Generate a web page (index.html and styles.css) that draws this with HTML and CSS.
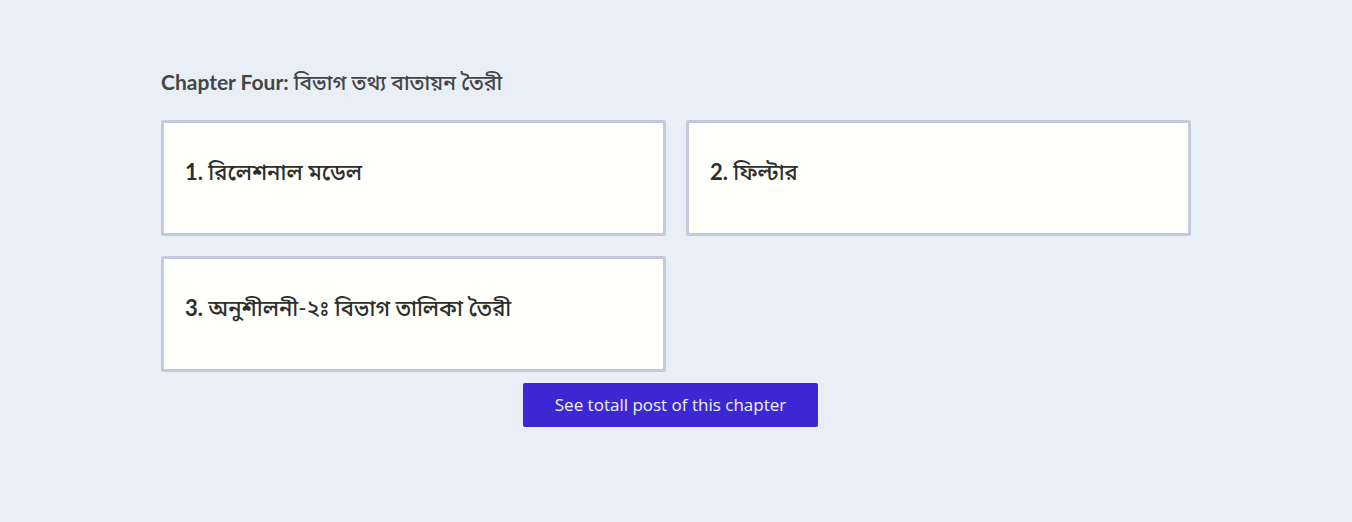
FILE: index.html
```html
<!DOCTYPE html>
<html lang="bn">
<head>
<meta charset="utf-8">
<title>Chapter Four</title>
<link rel="stylesheet" href="styles.css">
</head>
<body>
<main class="chapter">
  <h2 class="chapter-title">Chapter Four: <span class="bn">বিভাগ তথ্য বাতায়ন তৈরী</span></h2>
  <div class="post-grid">
    <a class="post-card" href="#"><h3>1. <span class="bn">রিলেশনাল মডেল</span></h3></a>
    <a class="post-card" href="#"><h3>2. <span class="bn">ফিল্টার</span></h3></a>
    <a class="post-card" href="#"><h3>3. <span class="bn">অনুশীলনী-২ঃ বিভাগ তালিকা তৈরী</span></h3></a>
  </div>
  <div class="more-row">
    <a class="more-btn" href="#">See totall post of this chapter</a>
  </div>
</main>
</body>
</html>
```

FILE: styles.css
```css
html, body {
  margin: 0;
  padding: 0;
}
body {
  background: #e8eff7;
  font-family: "Lato", "Noto Sans Bengali", "Noto Sans", sans-serif;
  color: #333;
  min-height: 522px;
}
.bn {
  font-weight: 500;
}
.chapter {
  width: 1030px;
  margin: 0 0 0 161px;
  padding-top: 64px;
}
.chapter-title {
  margin: 0 0 20px;
  font-size: 21px;
  line-height: 36px;
  font-weight: 700;
  color: #454545;
}
.chapter-title .bn {
  font-size: 21px;
}
.post-grid {
  display: grid;
  grid-template-columns: 505px 505px;
  column-gap: 20px;
  row-gap: 20px;
}
.post-card {
  display: block;
  box-sizing: border-box;
  height: 116px;
  background: #fffffb;
  border: 3px solid #c6c9de;
  border-radius: 2px;
  padding: 34px 21px 0;
  text-decoration: none;
  color: #2e2e2e;
}
.post-card h3 {
  margin: 0;
  font-size: 22px;
  line-height: 30px;
  font-weight: 700;
}
.post-card .bn {
  font-size: 22px;
}
.more-row {
  display: flex;
  justify-content: center;
  padding-right: 11px;
  margin-top: 11px;
}
.more-btn {
  display: inline-block;
  width: 295px;
  height: 44px;
  line-height: 44px;
  text-align: center;
  background: #3b28d4;
  color: #f2f2ff;
  border-radius: 2px;
  font-family: "Open Sans", "Lato", sans-serif;
  font-size: 17px;
  text-decoration: none;
}
```
